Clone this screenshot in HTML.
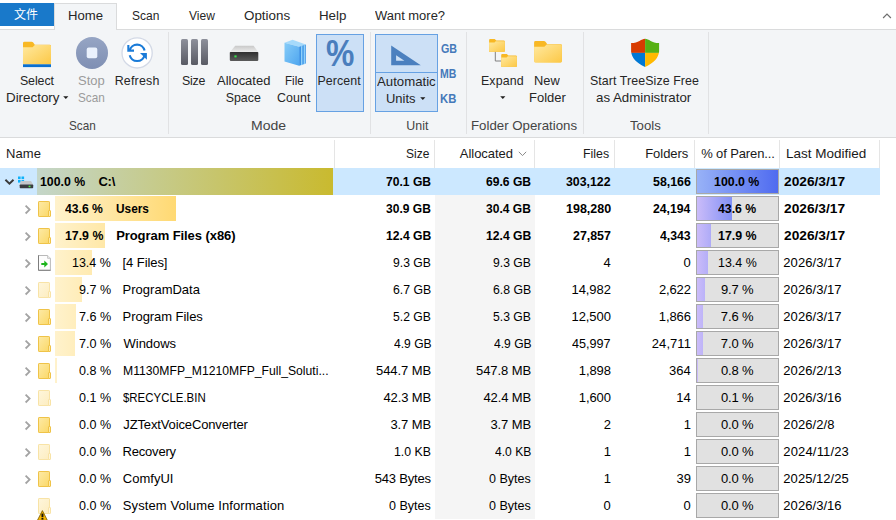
<!DOCTYPE html>
<html lang="en"><head><meta charset="utf-8"><title>TreeSize Free</title>
<style>
html,body{margin:0;padding:0;}
body{width:896px;height:520px;overflow:hidden;background:#fff;position:relative;font-family:"Liberation Sans","Noto Sans CJK SC",sans-serif;font-size:12px;color:#000;}
i{display:block;position:absolute;font-style:normal;}
.x{position:absolute;white-space:nowrap;display:block;}
.ic{position:absolute;}
.tabs{position:absolute;left:0;top:0;width:896px;height:30px;}
.tabs .ln{left:0;top:29px;width:896px;height:1px;background:#dadbdc;}
.tabs .file{left:0;top:3px;width:54px;height:23px;background:#1979ca;}
.tabs .home{left:54px;top:3px;width:63px;height:27px;box-sizing:border-box;border:1px solid #dadbdc;border-bottom:none;background:#f3f5f7;}
.tabs .homecover{left:55px;top:29px;width:61px;height:1px;background:#f3f5f7;}
.ribbon{position:absolute;left:0;top:0;width:896px;height:138px;background:linear-gradient(#f3f5f7,#f3f5f7) no-repeat 0 30px/896px 107px;z-index:0;}
.tabs{z-index:1;}
.ribbon:after{content:"";position:absolute;left:0;top:137px;width:896px;height:1px;background:#dadbdc;}
.ribbon .sep{top:32px;width:1px;height:102px;background:#e1e2e4;}
.ribbon .hl{background:#cce0f6;border:1px solid #66a1e3;box-sizing:border-box;}
.ribbon svg.icons{position:absolute;left:0;top:30px;}
.hdr{position:absolute;left:0;top:0;width:896px;height:0;}
.hdr .vl{top:140px;width:1px;height:28px;background:#e5e5e5;}
.tree{position:absolute;left:0;top:0;width:896px;height:520px;}
.selbg{left:0;width:880px;height:27px;background:#cce8ff;}
.abg{left:435px;width:100px;height:27px;background:#f5f5f5;}
.ubar{height:25px;background:linear-gradient(90deg,#fff2cc 0,#ffb900 278px);}
.ubar.root{height:27px;background:linear-gradient(90deg,#c4d6c9,#c9ba2f);}
.pb{left:696px;width:83px;height:25px;box-sizing:border-box;border:1px solid #a8a8a8;background:#e1e1e1;}
.pb .pf{left:0;top:0;height:23px;background:linear-gradient(90deg,#cbbcf9 0,#2459f0 81px);}
.pb .pf.full{background:linear-gradient(90deg,#98b2f7,#4f6bf0);}

</style></head><body>
<div class="tabs"><i class="file"></i><i class="home"></i><i class="ln"></i><i class="homecover"></i><span class="x" style="left:13.9px;top:6.5px;font-size:12px;line-height:17px;color:#fff;">文件</span><span class="x" style="left:67.80px;top:9.74px;font-size:12px;line-height:13.40px;transform-origin:0 50%;transform:scaleX(1.095);color:#262626;">Home</span><span class="x" style="left:131.95px;top:9.74px;font-size:12px;line-height:13.40px;letter-spacing:0.017px;color:#262626;">Scan</span><span class="x" style="left:188.90px;top:9.74px;font-size:12px;line-height:13.40px;letter-spacing:0.050px;color:#262626;">View</span><span class="x" style="left:243.64px;top:9.74px;font-size:12px;line-height:13.40px;transform-origin:0 50%;transform:scaleX(1.114);color:#262626;">Options</span><span class="x" style="left:318.59px;top:9.74px;font-size:12px;line-height:13.40px;transform-origin:0 50%;transform:scaleX(1.110);color:#262626;">Help</span><span class="x" style="left:375.40px;top:9.74px;font-size:12px;line-height:13.40px;transform-origin:0 50%;transform:scaleX(1.079);color:#262626;">Want more?</span><svg style="position:absolute;left:881px;top:12px" width="12" height="8" viewBox="881 12 12 8"><path d="M883.1 18 L887 14.1 L890.9 18" fill="none" stroke="#6e6e6e" stroke-width="1.2"/></svg></div>
<div class="ribbon"><i class="sep" style="left:168px"></i><i class="sep" style="left:370px"></i><i class="sep" style="left:466px"></i><i class="sep" style="left:583px"></i><i class="sep" style="left:708px"></i><i class="hl" style="left:316px;top:34px;width:48px;height:78px"></i><i class="hl" style="left:375px;top:34px;width:63px;height:78px"></i><i style="left:375px;top:72px;width:63px;height:1px;background:#66a1e3"></i><svg class="icons" width="896" height="107" viewBox="0 30 896 107">
<defs>
<linearGradient id="gf" x1="0" y1="0" x2="1" y2="1"><stop offset="0" stop-color="#ffe9a0"/><stop offset="1" stop-color="#fcc846"/></linearGradient>
<linearGradient id="gs" x1="0" y1="0" x2="0" y2="1"><stop offset="0" stop-color="#96a5c4"/><stop offset="1" stop-color="#7f8fb3"/></linearGradient>
<linearGradient id="gb" x1="0" y1="0" x2="0" y2="1"><stop offset="0" stop-color="#8d909b"/><stop offset="1" stop-color="#595b64"/></linearGradient>
<linearGradient id="gd" x1="0" y1="0" x2="0" y2="1"><stop offset="0" stop-color="#2f2f2f"/><stop offset="1" stop-color="#5a5a5a"/></linearGradient>
<linearGradient id="gt" x1="0" y1="0" x2="0" y2="1"><stop offset="0" stop-color="#c9c9c9"/><stop offset="1" stop-color="#ececec"/></linearGradient>
<linearGradient id="gp" x1="0" y1="0" x2="1" y2="1"><stop offset="0" stop-color="#86ccf8"/><stop offset="1" stop-color="#4fa6ef"/></linearGradient>
</defs>
<!-- select directory folder -->
<path d="M23 43.2 q0 -1.4 1.4 -1.4 h7.2 q1 0 1.6 0.8 l1.6 2.2 h14.8 q1.4 0 1.4 1.4 v18 h-28 z" fill="#f8b824"/>
<path d="M23 47.2 h9.6 l2.2 -2.2 h14.8 q1.4 0 1.4 1.4 v17.8 h-28 z" fill="url(#gf)"/>
<rect x="23" y="64.3" width="28" height="2.8" fill="#0b6fd0"/>
<!-- stop -->
<circle cx="92" cy="52.9" r="16" fill="url(#gs)"/>
<rect x="86.7" y="47.6" width="10.6" height="10.6" rx="2" fill="#eaf1fc"/>
<!-- refresh -->
<circle cx="137.1" cy="52.9" r="15.1" fill="#fff" stroke="#d3d9e6" stroke-width="1.3"/>
<path d="M129.6 50.6 A7.7 7.7 0 0 1 144.6 50.6" fill="none" stroke="#1a7bd8" stroke-width="2.1"/>
<path d="M127.3 45 L127.3 51.7 L134 51.7 L134 49.6 L129.4 49.6 L129.4 45 Z" fill="#1a7bd8"/>
<path d="M144.6 55.2 A7.7 7.7 0 0 1 129.7 55.2" fill="none" stroke="#1a7bd8" stroke-width="2.1"/>
<path d="M140 53 L146.9 53 L146.9 59.8 Z" fill="#1a7bd8"/>
<!-- size bars -->
<rect x="181" y="39" width="7" height="26" rx="1.5" fill="url(#gb)"/>
<rect x="191" y="39" width="7" height="26" rx="1.5" fill="url(#gb)"/>
<rect x="201" y="39" width="7" height="26" rx="1.5" fill="url(#gb)"/>
<!-- drive -->
<path d="M235.2 45.8 L253.6 45.8 L258.3 52.2 L229.8 52.2 Z" fill="url(#gt)"/>
<rect x="229.8" y="52" width="28.5" height="8.9" rx="0.8" fill="url(#gd)"/>
<rect x="234.4" y="55.4" width="2.2" height="2" fill="#37e04a"/>
<!-- file count -->
<path d="M284.5 42.8 L292.6 39.8 L305.8 44.6 L299.1 46.8 Z" fill="#a6dafb"/>
<path d="M299.1 46.8 L305.8 44.6 L305.8 63.6 L299.1 65.8 Z" fill="#3a93e6"/>
<path d="M301 46.2 L302.4 45.7 L302.4 64.7 L301 65.2 Z" fill="#8fd0fa"/>
<path d="M303.7 45.3 L305 44.9 L305 63.9 L303.7 64.3 Z" fill="#8fd0fa"/>
<path d="M284.5 42.8 L299.1 46.8 L299.1 65.8 L284.5 61.6 Z" fill="url(#gp)"/>
<!-- percent -->
<text x="340.2" y="66" text-anchor="middle" font-family="Liberation Sans, sans-serif" font-weight="bold" font-size="37.5" fill="#4a7ebd" transform="translate(340.2 0) scale(0.85 1) translate(-340.2 0)">%</text>
<!-- set square -->
<path d="M391.2 45.4 L420.8 65.2 L391.2 65.2 Z M396.1 55.2 L396.1 60.8 L404.4 60.8 Z" fill="#4b80bf" fill-rule="evenodd"/>
<!-- expand -->
<path d="M495.3 51 V61 H501.5" fill="none" stroke="#808080" stroke-width="1"/>
<path d="M489.1 40 q0 -1 1 -1 h4.6 l1.6 1.6 h7.5 q1 0 1 1 v10.1 h-15.7 z" fill="#f8b824"/>
<path d="M489.1 42.4 h5.4 l1.2 -1.2 h8.1 q1 0 1 1 v8.5 q0 1 -1 1 h-13.7 q-1 0 -1 -1 z" fill="url(#gf)"/>
<path d="M501.2 55 q0 -1 1 -1 h4.6 l1.6 1.6 h7.5 q1 0 1 1 v10.1 h-15.7 z" fill="#f8b824"/>
<path d="M501.2 57.4 h5.4 l1.2 -1.2 h8.1 q1 0 1 1 v8.5 q0 1 -1 1 h-13.7 q-1 0 -1 -1 z" fill="url(#gf)"/>
<!-- new folder -->
<path d="M534.1 42.4 q0 -1.4 1.4 -1.4 h8.4 q1 0 1.6 0.8 l1.8 2.4 h13.3 q1.4 0 1.4 1.4 v15.8 h-27.9 z" fill="#f8b824"/>
<path d="M534.1 46.8 h10.3 l2.2 -2.2 h13.9 q1.4 0 1.4 1.4 v15.3 q0 1.4 -1.4 1.4 h-25 q-1.4 0 -1.4 -1.4 z" fill="url(#gf)"/>
<!-- shield -->
<clipPath id="sh"><path d="M645.1 38.7 C641.5 38.7 638.5 43 631.1 43.1 L631.1 51.5 C631.6 58 636.5 63 645.1 67.1 C653.7 63 658.6 58 659.1 51.5 L659.1 43.1 C651.7 43 648.7 38.7 645.1 38.7 Z"/></clipPath>
<g clip-path="url(#sh)">
<rect x="630" y="38" width="15.1" height="14.9" fill="#d83b01"/>
<rect x="645.1" y="38" width="15" height="14.9" fill="#57b114"/>
<rect x="630" y="52.9" width="15.1" height="15" fill="#0078d4"/>
<rect x="645.1" y="52.9" width="15" height="15" fill="#ffb900"/>
</g>
</svg>
<span class="x" style="left:19.95px;top:74.98px;font-size:12.4px;line-height:13.85px;letter-spacing:-0.080px;color:#262626;">Select</span><span class="x" style="left:5.62px;top:91.98px;font-size:12.4px;line-height:13.85px;transform-origin:0 50%;transform:scaleX(1.078);color:#262626;">Directory</span><span class="x" style="left:78.11px;top:74.98px;font-size:12.4px;line-height:13.85px;transform-origin:0 50%;transform:scaleX(1.047);color:#9b9b9b;">Stop</span><span class="x" style="left:78.19px;top:91.98px;font-size:12.4px;line-height:13.85px;transform-origin:0 50%;transform:scaleX(0.950);color:#9b9b9b;">Scan</span><span class="x" style="left:114.70px;top:74.98px;font-size:12.4px;line-height:13.85px;letter-spacing:0.217px;color:#262626;">Refresh</span><span class="x" style="left:181.95px;top:74.98px;font-size:12.4px;line-height:13.85px;letter-spacing:-0.217px;color:#262626;">Size</span><span class="x" style="left:217.20px;top:74.98px;font-size:12.4px;line-height:13.85px;transform-origin:0 50%;transform:scaleX(1.047);color:#262626;">Allocated</span><span class="x" style="left:225.65px;top:91.98px;font-size:12.4px;line-height:13.85px;letter-spacing:0.038px;color:#262626;">Space</span><span class="x" style="left:284.76px;top:74.98px;font-size:12.4px;line-height:13.85px;transform-origin:0 50%;transform:scaleX(0.935);color:#262626;">File</span><span class="x" style="left:276.95px;top:91.98px;font-size:12.4px;line-height:13.85px;letter-spacing:0.138px;color:#262626;">Count</span><span class="x" style="left:317.40px;top:74.98px;font-size:12.4px;line-height:13.85px;letter-spacing:0.100px;color:#262626;">Percent</span><span class="x" style="left:377.00px;top:75.58px;font-size:12.4px;line-height:13.85px;transform-origin:0 50%;transform:scaleX(1.065);color:#262626;">Automatic</span><span class="x" style="left:386.25px;top:92.58px;font-size:12.4px;line-height:13.85px;transform-origin:0 50%;transform:scaleX(1.047);color:#262626;">Units</span><span class="x" style="left:480.90px;top:74.98px;font-size:12.4px;line-height:13.85px;letter-spacing:0.170px;color:#262626;">Expand</span><span class="x" style="left:534.16px;top:74.98px;font-size:12.4px;line-height:13.85px;transform-origin:0 50%;transform:scaleX(1.036);color:#262626;">New</span><span class="x" style="left:528.65px;top:91.98px;font-size:12.4px;line-height:13.85px;transform-origin:0 50%;transform:scaleX(1.047);color:#262626;">Folder</span><span class="x" style="left:589.95px;top:74.98px;font-size:12.4px;line-height:13.85px;letter-spacing:0.086px;color:#262626;">Start TreeSize Free</span><span class="x" style="left:595.86px;top:91.98px;font-size:12.4px;line-height:13.85px;transform-origin:0 50%;transform:scaleX(1.072);color:#262626;">as Administrator</span><span class="x" style="left:69.49px;top:119.78px;font-size:12.4px;line-height:13.85px;transform-origin:0 50%;transform:scaleX(0.946);color:#444;">Scan</span><span class="x" style="left:250.77px;top:119.78px;font-size:12.4px;line-height:13.85px;transform-origin:0 50%;transform:scaleX(1.132);color:#444;">Mode</span><span class="x" style="left:406.20px;top:119.78px;font-size:12.4px;line-height:13.85px;letter-spacing:0.100px;color:#444;">Unit</span><span class="x" style="left:470.83px;top:119.78px;font-size:12.4px;line-height:13.85px;transform-origin:0 50%;transform:scaleX(1.070);color:#444;">Folder Operations</span><span class="x" style="left:629.93px;top:119.78px;font-size:12.4px;line-height:13.85px;transform-origin:0 50%;transform:scaleX(1.065);color:#444;">Tools</span><svg class="ic" style="left:63.0px;top:96.3px" width="6" height="4" viewBox="0 0 6 4"><path d="M0.2 0.3 H5.4 L2.8 3.1 Z" fill="#1e1e1e"/></svg><svg class="ic" style="left:419.9px;top:97.0px" width="6" height="4" viewBox="0 0 6 4"><path d="M0.2 0.3 H5.4 L2.8 3.1 Z" fill="#1e1e1e"/></svg><svg class="ic" style="left:500.1px;top:96.3px" width="6" height="4" viewBox="0 0 6 4"><path d="M0.2 0.3 H5.4 L2.8 3.1 Z" fill="#1e1e1e"/></svg><span class="x" style="left:440.59px;top:41.84px;font-size:13px;line-height:14.52px;transform-origin:0 50%;transform:scaleX(0.822);font-weight:bold;color:#4579ba;">GB</span><span class="x" style="left:440.39px;top:66.83px;font-size:13px;line-height:14.52px;transform-origin:0 50%;transform:scaleX(0.811);font-weight:bold;color:#4579ba;">MB</span><span class="x" style="left:440.35px;top:92.03px;font-size:13px;line-height:14.52px;transform-origin:0 50%;transform:scaleX(0.869);font-weight:bold;color:#4579ba;">KB</span></div>
<div class="hdr"><i class="vl" style="left:334px"></i><i class="vl" style="left:434px"></i><i class="vl" style="left:534px"></i><i class="vl" style="left:614px"></i><i class="vl" style="left:694px"></i><i class="vl" style="left:779px"></i><i class="vl" style="left:879px"></i><span class="x" style="left:5.90px;top:147.44px;font-size:13px;line-height:14.52px;letter-spacing:0.133px;color:#1a1a1a;">Name</span><span class="x" style="left:405.81px;top:147.44px;font-size:13px;line-height:14.52px;transform-origin:0 50%;transform:scaleX(0.921);color:#1a1a1a;">Size</span><span class="x" style="left:459.80px;top:147.44px;font-size:13px;line-height:14.52px;letter-spacing:-0.031px;color:#1a1a1a;">Allocated</span><span class="x" style="left:582.65px;top:147.44px;font-size:13px;line-height:14.52px;transform-origin:0 50%;transform:scaleX(0.950);color:#1a1a1a;">Files</span><span class="x" style="left:645.20px;top:147.44px;font-size:13px;line-height:14.52px;letter-spacing:-0.033px;color:#1a1a1a;">Folders</span><span class="x" style="left:701.20px;top:147.44px;font-size:13px;line-height:14.52px;letter-spacing:-0.125px;color:#1a1a1a;">% of Paren...</span><span class="x" style="left:785.66px;top:147.44px;font-size:13px;line-height:14.52px;transform-origin:0 50%;transform:scaleX(1.038);color:#1a1a1a;">Last Modified</span><svg class="ic" style="left:518px;top:151px" width="9" height="6" viewBox="0 0 9 6"><path d="M0.8 0.8 L4.5 4.6 L8.2 0.8" fill="none" stroke="#8a8a8a" stroke-width="1"/></svg></div>
<div class="tree">
<i class="selbg" style="top:168px"></i><i class="ubar root" style="left:37px;top:168px;width:296px"></i><svg class="ic" style="left:4px;top:178px" width="11" height="8" viewBox="4 178 11 8"><path d="M5.4 179.7 L9.45 183.7 L13.5 179.7" fill="none" stroke="#3a3a3a" stroke-width="1.9"/></svg><svg class="ic" style="left:17px;top:176px" width="17" height="14" viewBox="17 176 17 14"><rect x="18" y="176.5" width="2.6" height="2.6" fill="#0db2fb"/><rect x="21.5" y="176.5" width="2.6" height="2.6" fill="#0db2fb"/><rect x="18" y="180" width="2.6" height="2.6" fill="#0db2fb"/><rect x="21.5" y="180" width="2.6" height="2.6" fill="#0db2fb"/><path d="M21 181 H31 L33.2 184.8 H19.7 Z" fill="#c4c7cb"/><rect x="19.7" y="184.5" width="13.5" height="3.8" rx="0.7" fill="#3b3d41"/><rect x="28.6" y="185.7" width="1.9" height="1.5" fill="#4df04a"/></svg><span class="x" style="left:40.19px;top:175.44px;font-size:13px;line-height:14.52px;transform-origin:0 50%;transform:scaleX(0.946);font-weight:bold;">100.0 %</span><span class="x" style="left:98.40px;top:175.44px;font-size:13px;line-height:14.52px;letter-spacing:-0.175px;font-weight:bold;">C:\</span><span class="x" style="left:386.03px;top:175.44px;font-size:13px;line-height:14.52px;transform-origin:0 50%;transform:scaleX(0.931);font-weight:bold;">70.1 GB</span><span class="x" style="left:486.03px;top:175.44px;font-size:13px;line-height:14.52px;transform-origin:0 50%;transform:scaleX(0.931);font-weight:bold;">69.6 GB</span><span class="x" style="left:566.26px;top:175.44px;font-size:13px;line-height:14.52px;transform-origin:0 50%;transform:scaleX(0.949);font-weight:bold;">303,122</span><span class="x" style="left:653.02px;top:175.44px;font-size:13px;line-height:14.52px;transform-origin:0 50%;transform:scaleX(0.952);font-weight:bold;">58,166</span><i class="pb" style="top:169px"><i class="pf full" style="width:81.0px"></i></i><span class="x" style="left:714.49px;top:175.44px;font-size:13px;line-height:14.52px;transform-origin:0 50%;transform:scaleX(0.951);font-weight:bold;">100.0 %</span><span class="x" style="left:783.97px;top:175.44px;font-size:13px;line-height:14.52px;transform-origin:0 50%;transform:scaleX(1.056);font-weight:bold;">2026/3/17</span>
<i class="abg" style="top:195px"></i><i class="ubar" style="left:55px;top:196px;width:121.2px"></i><svg class="ic" style="left:24px;top:204px" width="8" height="11" viewBox="24 204 8 11"><path d="M25.6 205.6 L29.6 209.55 L25.6 213.5" fill="none" stroke="#a3a3a3" stroke-width="1.8"/></svg><svg class="ic" style="left:38px;top:201px" width="14" height="16" viewBox="0 0 14 16"><defs><linearGradient id="fgfolder" x1="0" y1="0" x2="1" y2="1"><stop offset="0" stop-color="#fdeaa6"/><stop offset="1" stop-color="#fbd867"/></linearGradient></defs><rect x="0.5" y="0.5" width="11" height="15" rx="0.6" fill="url(#fgfolder)" stroke="#efc348" stroke-width="1"/><rect x="10.5" y="9.5" width="2" height="6" rx="0.5" fill="#fdeaa6" stroke="#efc348" stroke-width="1"/></svg><span class="x" style="left:65.47px;top:202.44px;font-size:13px;line-height:14.52px;transform-origin:0 50%;transform:scaleX(0.935);font-weight:bold;">43.6 %</span><span class="x" style="left:116.22px;top:202.44px;font-size:13px;line-height:14.52px;transform-origin:0 50%;transform:scaleX(0.912);font-weight:bold;">Users</span><span class="x" style="left:386.27px;top:202.44px;font-size:13px;line-height:14.52px;transform-origin:0 50%;transform:scaleX(0.926);font-weight:bold;">30.9 GB</span><span class="x" style="left:486.27px;top:202.44px;font-size:13px;line-height:14.52px;transform-origin:0 50%;transform:scaleX(0.926);font-weight:bold;">30.4 GB</span><span class="x" style="left:565.78px;top:202.44px;font-size:13px;line-height:14.52px;transform-origin:0 50%;transform:scaleX(0.960);font-weight:bold;">198,280</span><span class="x" style="left:653.03px;top:202.44px;font-size:13px;line-height:14.52px;transform-origin:0 50%;transform:scaleX(0.940);font-weight:bold;">24,194</span><i class="pb" style="top:196px"><i class="pf" style="width:35.0px"></i></i><span class="x" style="left:718.21px;top:202.44px;font-size:13px;line-height:14.52px;transform-origin:0 50%;transform:scaleX(0.943);font-weight:bold;">43.6 %</span><span class="x" style="left:783.97px;top:202.44px;font-size:13px;line-height:14.52px;transform-origin:0 50%;transform:scaleX(1.056);font-weight:bold;">2026/3/17</span>
<i class="abg" style="top:222px"></i><i class="ubar" style="left:55px;top:223px;width:49.8px"></i><svg class="ic" style="left:24px;top:231px" width="8" height="11" viewBox="24 204 8 11"><path d="M25.6 205.6 L29.6 209.55 L25.6 213.5" fill="none" stroke="#a3a3a3" stroke-width="1.8"/></svg><svg class="ic" style="left:38px;top:228px" width="14" height="16" viewBox="0 0 14 16"><defs><linearGradient id="fgfolder" x1="0" y1="0" x2="1" y2="1"><stop offset="0" stop-color="#fdeaa6"/><stop offset="1" stop-color="#fbd867"/></linearGradient></defs><rect x="0.5" y="0.5" width="11" height="15" rx="0.6" fill="url(#fgfolder)" stroke="#efc348" stroke-width="1"/><rect x="10.5" y="9.5" width="2" height="6" rx="0.5" fill="#fdeaa6" stroke="#efc348" stroke-width="1"/></svg><span class="x" style="left:64.99px;top:229.44px;font-size:13px;line-height:14.52px;transform-origin:0 50%;transform:scaleX(0.947);font-weight:bold;">17.9 %</span><span class="x" style="left:116.15px;top:229.44px;font-size:13px;line-height:14.52px;letter-spacing:-0.069px;font-weight:bold;">Program Files (x86)</span><span class="x" style="left:385.80px;top:229.44px;font-size:13px;line-height:14.52px;transform-origin:0 50%;transform:scaleX(0.936);font-weight:bold;">12.4 GB</span><span class="x" style="left:485.80px;top:229.44px;font-size:13px;line-height:14.52px;transform-origin:0 50%;transform:scaleX(0.936);font-weight:bold;">12.4 GB</span><span class="x" style="left:573.02px;top:229.44px;font-size:13px;line-height:14.52px;transform-origin:0 50%;transform:scaleX(0.952);font-weight:bold;">27,857</span><span class="x" style="left:660.26px;top:229.44px;font-size:13px;line-height:14.52px;transform-origin:0 50%;transform:scaleX(0.942);font-weight:bold;">4,343</span><i class="pb" style="top:223px"><i class="pf" style="width:14.0px"></i></i><span class="x" style="left:717.73px;top:229.44px;font-size:13px;line-height:14.52px;transform-origin:0 50%;transform:scaleX(0.954);font-weight:bold;">17.9 %</span><span class="x" style="left:783.97px;top:229.44px;font-size:13px;line-height:14.52px;transform-origin:0 50%;transform:scaleX(1.056);font-weight:bold;">2026/3/17</span>
<i class="abg" style="top:249px"></i><i class="ubar" style="left:55px;top:250px;width:37.3px"></i><svg class="ic" style="left:24px;top:258px" width="8" height="11" viewBox="24 204 8 11"><path d="M25.6 205.6 L29.6 209.55 L25.6 213.5" fill="none" stroke="#a3a3a3" stroke-width="1.8"/></svg><svg class="ic" style="left:38px;top:255px" width="13" height="16" viewBox="0 0 13 16"><path d="M0.5 0.5 H9.6 L12.4 3.3 V15.3 H0.5 Z" fill="#fdfdfd" stroke="#b9b9b9" stroke-width="1"/><path d="M0.5 0.3 V15.3 H12.6" fill="none" stroke="#7d7d7d" stroke-width="1"/><path d="M9.6 0.5 V3.3 H12.4" fill="#f0f0f0" stroke="#b9b9b9" stroke-width="0.8"/><path d="M3.3 7.9 H6.3 V5.6 L10 9 L6.3 12.4 V10.1 H3.3 Z" fill="#1cb41c"/></svg><span class="x" style="left:72.14px;top:256.44px;font-size:13px;line-height:14.52px;transform-origin:0 50%;transform:scaleX(0.959);">13.4 %</span><span class="x" style="left:122.60px;top:256.44px;font-size:13px;line-height:14.52px;letter-spacing:-0.087px;">[4 Files]</span><span class="x" style="left:393.31px;top:256.44px;font-size:13px;line-height:14.52px;transform-origin:0 50%;transform:scaleX(0.936);">9.3 GB</span><span class="x" style="left:493.31px;top:256.44px;font-size:13px;line-height:14.52px;transform-origin:0 50%;transform:scaleX(0.936);">9.3 GB</span><span class="x" style="left:603.45px;top:256.44px;font-size:13px;line-height:14.52px;letter-spacing:0.000px;">4</span><span class="x" style="left:683.45px;top:256.44px;font-size:13px;line-height:14.52px;letter-spacing:0.000px;">0</span><i class="pb" style="top:250px"><i class="pf" style="width:10.5px"></i></i><span class="x" style="left:717.69px;top:256.44px;font-size:13px;line-height:14.52px;transform-origin:0 50%;transform:scaleX(0.956);">13.4 %</span><span class="x" style="left:783.35px;top:256.44px;font-size:13px;line-height:14.52px;letter-spacing:0.050px;">2026/3/17</span>
<i class="abg" style="top:276px"></i><i class="ubar" style="left:55px;top:277px;width:27.0px"></i><svg class="ic" style="left:24px;top:285px" width="8" height="11" viewBox="24 204 8 11"><path d="M25.6 205.6 L29.6 209.55 L25.6 213.5" fill="none" stroke="#a3a3a3" stroke-width="1.8"/></svg><svg class="ic" style="left:38px;top:282px" width="14" height="16" viewBox="0 0 14 16"><defs><linearGradient id="fgfolderlight" x1="0" y1="0" x2="1" y2="1"><stop offset="0" stop-color="#fef6dc"/><stop offset="1" stop-color="#fdedc0"/></linearGradient></defs><rect x="0.5" y="0.5" width="11" height="15" rx="0.6" fill="url(#fgfolderlight)" stroke="#f8e3a6" stroke-width="1"/><rect x="10.5" y="9.5" width="2" height="6" rx="0.5" fill="#fef6dc" stroke="#f8e3a6" stroke-width="1"/></svg><span class="x" style="left:78.92px;top:283.44px;font-size:13px;line-height:14.52px;transform-origin:0 50%;transform:scaleX(0.964);">9.7 %</span><span class="x" style="left:122.60px;top:283.44px;font-size:13px;line-height:14.52px;letter-spacing:0.005px;">ProgramData</span><span class="x" style="left:393.07px;top:283.44px;font-size:13px;line-height:14.52px;transform-origin:0 50%;transform:scaleX(0.942);">6.7 GB</span><span class="x" style="left:493.07px;top:283.44px;font-size:13px;line-height:14.52px;transform-origin:0 50%;transform:scaleX(0.942);">6.8 GB</span><span class="x" style="left:571.56px;top:283.44px;font-size:13px;line-height:14.52px;letter-spacing:-0.082px;">14,982</span><span class="x" style="left:659.00px;top:283.44px;font-size:13px;line-height:14.52px;letter-spacing:-0.150px;">2,622</span><i class="pb" style="top:277px"><i class="pf" style="width:7.5px"></i></i><span class="x" style="left:721.00px;top:283.44px;font-size:13px;line-height:14.52px;letter-spacing:-0.163px;">9.7 %</span><span class="x" style="left:783.35px;top:283.44px;font-size:13px;line-height:14.52px;letter-spacing:0.050px;">2026/3/17</span>
<i class="abg" style="top:303px"></i><i class="ubar" style="left:55px;top:304px;width:21.1px"></i><svg class="ic" style="left:24px;top:312px" width="8" height="11" viewBox="24 204 8 11"><path d="M25.6 205.6 L29.6 209.55 L25.6 213.5" fill="none" stroke="#a3a3a3" stroke-width="1.8"/></svg><svg class="ic" style="left:38px;top:309px" width="14" height="16" viewBox="0 0 14 16"><defs><linearGradient id="fgfolder" x1="0" y1="0" x2="1" y2="1"><stop offset="0" stop-color="#fdeaa6"/><stop offset="1" stop-color="#fbd867"/></linearGradient></defs><rect x="0.5" y="0.5" width="11" height="15" rx="0.6" fill="url(#fgfolder)" stroke="#efc348" stroke-width="1"/><rect x="10.5" y="9.5" width="2" height="6" rx="0.5" fill="#fdeaa6" stroke="#efc348" stroke-width="1"/></svg><span class="x" style="left:78.67px;top:310.44px;font-size:13px;line-height:14.52px;transform-origin:0 50%;transform:scaleX(0.972);">7.6 %</span><span class="x" style="left:122.60px;top:310.44px;font-size:13px;line-height:14.52px;letter-spacing:-0.058px;">Program Files</span><span class="x" style="left:393.31px;top:310.44px;font-size:13px;line-height:14.52px;transform-origin:0 50%;transform:scaleX(0.936);">5.2 GB</span><span class="x" style="left:493.31px;top:310.44px;font-size:13px;line-height:14.52px;transform-origin:0 50%;transform:scaleX(0.936);">5.3 GB</span><span class="x" style="left:571.56px;top:310.44px;font-size:13px;line-height:14.52px;letter-spacing:-0.082px;">12,500</span><span class="x" style="left:658.75px;top:310.44px;font-size:13px;line-height:14.52px;letter-spacing:-0.088px;">1,866</span><i class="pb" style="top:304px"><i class="pf" style="width:6.0px"></i></i><span class="x" style="left:720.75px;top:310.44px;font-size:13px;line-height:14.52px;letter-spacing:-0.100px;">7.6 %</span><span class="x" style="left:783.35px;top:310.44px;font-size:13px;line-height:14.52px;letter-spacing:0.050px;">2026/3/17</span>
<i class="abg" style="top:330px"></i><i class="ubar" style="left:55px;top:331px;width:19.5px"></i><svg class="ic" style="left:24px;top:339px" width="8" height="11" viewBox="24 204 8 11"><path d="M25.6 205.6 L29.6 209.55 L25.6 213.5" fill="none" stroke="#a3a3a3" stroke-width="1.8"/></svg><svg class="ic" style="left:38px;top:336px" width="14" height="16" viewBox="0 0 14 16"><defs><linearGradient id="fgfolder" x1="0" y1="0" x2="1" y2="1"><stop offset="0" stop-color="#fdeaa6"/><stop offset="1" stop-color="#fbd867"/></linearGradient></defs><rect x="0.5" y="0.5" width="11" height="15" rx="0.6" fill="url(#fgfolder)" stroke="#efc348" stroke-width="1"/><rect x="10.5" y="9.5" width="2" height="6" rx="0.5" fill="#fdeaa6" stroke="#efc348" stroke-width="1"/></svg><span class="x" style="left:78.67px;top:337.44px;font-size:13px;line-height:14.52px;transform-origin:0 50%;transform:scaleX(0.972);">7.0 %</span><span class="x" style="left:123.60px;top:337.44px;font-size:13px;line-height:14.52px;letter-spacing:-0.058px;">Windows</span><span class="x" style="left:393.55px;top:337.44px;font-size:13px;line-height:14.52px;transform-origin:0 50%;transform:scaleX(0.930);">4.9 GB</span><span class="x" style="left:493.55px;top:337.44px;font-size:13px;line-height:14.52px;transform-origin:0 50%;transform:scaleX(0.930);">4.9 GB</span><span class="x" style="left:572.32px;top:337.44px;font-size:13px;line-height:14.52px;transform-origin:0 50%;transform:scaleX(0.970);">45,997</span><span class="x" style="left:651.81px;top:337.44px;font-size:13px;line-height:14.52px;letter-spacing:0.068px;">24,711</span><i class="pb" style="top:331px"><i class="pf" style="width:5.5px"></i></i><span class="x" style="left:720.75px;top:337.44px;font-size:13px;line-height:14.52px;letter-spacing:-0.100px;">7.0 %</span><span class="x" style="left:783.35px;top:337.44px;font-size:13px;line-height:14.52px;letter-spacing:0.050px;">2026/3/17</span>
<i class="abg" style="top:357px"></i><i class="ubar" style="left:55px;top:358px;width:2.2px"></i><svg class="ic" style="left:24px;top:366px" width="8" height="11" viewBox="24 204 8 11"><path d="M25.6 205.6 L29.6 209.55 L25.6 213.5" fill="none" stroke="#a3a3a3" stroke-width="1.8"/></svg><svg class="ic" style="left:38px;top:363px" width="14" height="16" viewBox="0 0 14 16"><defs><linearGradient id="fgfolder" x1="0" y1="0" x2="1" y2="1"><stop offset="0" stop-color="#fdeaa6"/><stop offset="1" stop-color="#fbd867"/></linearGradient></defs><rect x="0.5" y="0.5" width="11" height="15" rx="0.6" fill="url(#fgfolder)" stroke="#efc348" stroke-width="1"/><rect x="10.5" y="9.5" width="2" height="6" rx="0.5" fill="#fdeaa6" stroke="#efc348" stroke-width="1"/></svg><span class="x" style="left:78.92px;top:364.44px;font-size:13px;line-height:14.52px;transform-origin:0 50%;transform:scaleX(0.964);">0.8 %</span><span class="x" style="left:122.66px;top:364.44px;font-size:13px;line-height:14.52px;transform-origin:0 50%;transform:scaleX(0.937);">M1130MFP_M1210MFP_Full_Soluti...</span><span class="x" style="left:376.09px;top:364.44px;font-size:13px;line-height:14.52px;letter-spacing:-0.084px;">544.7 MB</span><span class="x" style="left:476.09px;top:364.44px;font-size:13px;line-height:14.52px;letter-spacing:-0.084px;">547.8 MB</span><span class="x" style="left:578.75px;top:364.44px;font-size:13px;line-height:14.52px;letter-spacing:-0.088px;">1,898</span><span class="x" style="left:668.95px;top:364.44px;font-size:13px;line-height:14.52px;letter-spacing:0.000px;">364</span><i class="pb" style="top:358px"><i class="pf" style="width:0.5px"></i></i><span class="x" style="left:721.00px;top:364.44px;font-size:13px;line-height:14.52px;letter-spacing:-0.163px;">0.8 %</span><span class="x" style="left:783.35px;top:364.44px;font-size:13px;line-height:14.52px;letter-spacing:0.050px;">2026/2/13</span>
<i class="abg" style="top:384px"></i><svg class="ic" style="left:24px;top:393px" width="8" height="11" viewBox="24 204 8 11"><path d="M25.6 205.6 L29.6 209.55 L25.6 213.5" fill="none" stroke="#a3a3a3" stroke-width="1.8"/></svg><svg class="ic" style="left:38px;top:390px" width="14" height="16" viewBox="0 0 14 16"><defs><linearGradient id="fgfolderlight" x1="0" y1="0" x2="1" y2="1"><stop offset="0" stop-color="#fef6dc"/><stop offset="1" stop-color="#fdedc0"/></linearGradient></defs><rect x="0.5" y="0.5" width="11" height="15" rx="0.6" fill="url(#fgfolderlight)" stroke="#f8e3a6" stroke-width="1"/><rect x="10.5" y="9.5" width="2" height="6" rx="0.5" fill="#fef6dc" stroke="#f8e3a6" stroke-width="1"/></svg><span class="x" style="left:78.92px;top:391.44px;font-size:13px;line-height:14.52px;transform-origin:0 50%;transform:scaleX(0.964);">0.1 %</span><span class="x" style="left:123.38px;top:391.44px;font-size:13px;line-height:14.52px;transform-origin:0 50%;transform:scaleX(0.880);">$RECYCLE.BIN</span><span class="x" style="left:383.53px;top:391.44px;font-size:13px;line-height:14.52px;letter-spacing:-0.130px;">42.3 MB</span><span class="x" style="left:483.53px;top:391.44px;font-size:13px;line-height:14.52px;letter-spacing:-0.130px;">42.4 MB</span><span class="x" style="left:578.75px;top:391.44px;font-size:13px;line-height:14.52px;letter-spacing:-0.088px;">1,600</span><span class="x" style="left:676.20px;top:391.44px;font-size:13px;line-height:14.52px;letter-spacing:0.000px;">14</span><i class="pb" style="top:385px"><i class="pf" style="width:0.0px"></i></i><span class="x" style="left:721.00px;top:391.44px;font-size:13px;line-height:14.52px;letter-spacing:-0.163px;">0.1 %</span><span class="x" style="left:783.35px;top:391.44px;font-size:13px;line-height:14.52px;letter-spacing:0.050px;">2026/3/16</span>
<i class="abg" style="top:411px"></i><svg class="ic" style="left:24px;top:420px" width="8" height="11" viewBox="24 204 8 11"><path d="M25.6 205.6 L29.6 209.55 L25.6 213.5" fill="none" stroke="#a3a3a3" stroke-width="1.8"/></svg><svg class="ic" style="left:38px;top:417px" width="14" height="16" viewBox="0 0 14 16"><defs><linearGradient id="fgfolder" x1="0" y1="0" x2="1" y2="1"><stop offset="0" stop-color="#fdeaa6"/><stop offset="1" stop-color="#fbd867"/></linearGradient></defs><rect x="0.5" y="0.5" width="11" height="15" rx="0.6" fill="url(#fgfolder)" stroke="#efc348" stroke-width="1"/><rect x="10.5" y="9.5" width="2" height="6" rx="0.5" fill="#fdeaa6" stroke="#efc348" stroke-width="1"/></svg><span class="x" style="left:78.92px;top:418.44px;font-size:13px;line-height:14.52px;transform-origin:0 50%;transform:scaleX(0.964);">0.0 %</span><span class="x" style="left:123.35px;top:418.44px;font-size:13px;line-height:14.52px;letter-spacing:-0.139px;">JZTextVoiceConverter</span><span class="x" style="left:390.47px;top:418.44px;font-size:13px;line-height:14.52px;letter-spacing:-0.094px;">3.7 MB</span><span class="x" style="left:490.47px;top:418.44px;font-size:13px;line-height:14.52px;letter-spacing:-0.094px;">3.7 MB</span><span class="x" style="left:603.70px;top:418.44px;font-size:13px;line-height:14.52px;letter-spacing:0.000px;">2</span><span class="x" style="left:683.70px;top:418.44px;font-size:13px;line-height:14.52px;letter-spacing:0.000px;">1</span><i class="pb" style="top:412px"><i class="pf" style="width:0.0px"></i></i><span class="x" style="left:721.00px;top:418.44px;font-size:13px;line-height:14.52px;letter-spacing:-0.163px;">0.0 %</span><span class="x" style="left:783.35px;top:418.44px;font-size:13px;line-height:14.52px;letter-spacing:0.064px;">2026/2/8</span>
<i class="abg" style="top:438px"></i><svg class="ic" style="left:24px;top:447px" width="8" height="11" viewBox="24 204 8 11"><path d="M25.6 205.6 L29.6 209.55 L25.6 213.5" fill="none" stroke="#a3a3a3" stroke-width="1.8"/></svg><svg class="ic" style="left:38px;top:444px" width="14" height="16" viewBox="0 0 14 16"><defs><linearGradient id="fgfolderlight" x1="0" y1="0" x2="1" y2="1"><stop offset="0" stop-color="#fef6dc"/><stop offset="1" stop-color="#fdedc0"/></linearGradient></defs><rect x="0.5" y="0.5" width="11" height="15" rx="0.6" fill="url(#fgfolderlight)" stroke="#f8e3a6" stroke-width="1"/><rect x="10.5" y="9.5" width="2" height="6" rx="0.5" fill="#fef6dc" stroke="#f8e3a6" stroke-width="1"/></svg><span class="x" style="left:78.92px;top:445.44px;font-size:13px;line-height:14.52px;transform-origin:0 50%;transform:scaleX(0.964);">0.0 %</span><span class="x" style="left:122.60px;top:445.44px;font-size:13px;line-height:14.52px;letter-spacing:-0.207px;">Recovery</span><span class="x" style="left:394.26px;top:445.44px;font-size:13px;line-height:14.52px;transform-origin:0 50%;transform:scaleX(0.947);">1.0 KB</span><span class="x" style="left:494.98px;top:445.44px;font-size:13px;line-height:14.52px;transform-origin:0 50%;transform:scaleX(0.929);">4.0 KB</span><span class="x" style="left:603.70px;top:445.44px;font-size:13px;line-height:14.52px;letter-spacing:0.000px;">1</span><span class="x" style="left:683.70px;top:445.44px;font-size:13px;line-height:14.52px;letter-spacing:0.000px;">1</span><i class="pb" style="top:439px"><i class="pf" style="width:0.0px"></i></i><span class="x" style="left:721.00px;top:445.44px;font-size:13px;line-height:14.52px;letter-spacing:-0.163px;">0.0 %</span><span class="x" style="left:783.35px;top:445.44px;font-size:13px;line-height:14.52px;letter-spacing:0.150px;">2024/11/23</span>
<i class="abg" style="top:465px"></i><svg class="ic" style="left:24px;top:474px" width="8" height="11" viewBox="24 204 8 11"><path d="M25.6 205.6 L29.6 209.55 L25.6 213.5" fill="none" stroke="#a3a3a3" stroke-width="1.8"/></svg><svg class="ic" style="left:38px;top:471px" width="14" height="16" viewBox="0 0 14 16"><defs><linearGradient id="fgfolder" x1="0" y1="0" x2="1" y2="1"><stop offset="0" stop-color="#fdeaa6"/><stop offset="1" stop-color="#fbd867"/></linearGradient></defs><rect x="0.5" y="0.5" width="11" height="15" rx="0.6" fill="url(#fgfolder)" stroke="#efc348" stroke-width="1"/><rect x="10.5" y="9.5" width="2" height="6" rx="0.5" fill="#fdeaa6" stroke="#efc348" stroke-width="1"/></svg><span class="x" style="left:78.92px;top:472.44px;font-size:13px;line-height:14.52px;transform-origin:0 50%;transform:scaleX(0.964);">0.0 %</span><span class="x" style="left:122.85px;top:472.44px;font-size:13px;line-height:14.52px;letter-spacing:0.000px;">ComfyUI</span><span class="x" style="left:374.72px;top:472.44px;font-size:13px;line-height:14.52px;letter-spacing:-0.184px;">543 Bytes</span><span class="x" style="left:489.12px;top:472.44px;font-size:13px;line-height:14.52px;transform-origin:0 50%;transform:scaleX(0.962);">0 Bytes</span><span class="x" style="left:603.70px;top:472.44px;font-size:13px;line-height:14.52px;letter-spacing:0.000px;">1</span><span class="x" style="left:676.45px;top:472.44px;font-size:13px;line-height:14.52px;letter-spacing:0.000px;">39</span><i class="pb" style="top:466px"><i class="pf" style="width:0.0px"></i></i><span class="x" style="left:721.00px;top:472.44px;font-size:13px;line-height:14.52px;letter-spacing:-0.163px;">0.0 %</span><span class="x" style="left:783.35px;top:472.44px;font-size:13px;line-height:14.52px;letter-spacing:0.039px;">2025/12/25</span>
<i class="abg" style="top:492px"></i><svg class="ic" style="left:38px;top:498px" width="14" height="16" viewBox="0 0 14 16"><defs><linearGradient id="fgfolderwarn" x1="0" y1="0" x2="1" y2="1"><stop offset="0" stop-color="#fef6dc"/><stop offset="1" stop-color="#fdedc0"/></linearGradient></defs><rect x="0.5" y="0.5" width="11" height="15" rx="0.6" fill="url(#fgfolderwarn)" stroke="#f8e3a6" stroke-width="1"/><rect x="10.5" y="9.5" width="2" height="6" rx="0.5" fill="#fef6dc" stroke="#f8e3a6" stroke-width="1"/></svg><svg class="ic" style="left:37px;top:510px" width="11" height="11" viewBox="0 0 11 11"><path d="M5.4 0.6 L10.4 10.4 L0.4 10.4 Z" fill="#f4b400" stroke="#7a5a00" stroke-width="0.8" stroke-linejoin="round"/><rect x="4.5" y="3.6" width="1.9" height="3.6" fill="#111"/><rect x="4.5" y="8" width="1.9" height="1.6" fill="#111"/></svg><span class="x" style="left:78.92px;top:499.44px;font-size:13px;line-height:14.52px;transform-origin:0 50%;transform:scaleX(0.964);">0.0 %</span><span class="x" style="left:122.85px;top:499.44px;font-size:13px;line-height:14.52px;letter-spacing:0.100px;">System Volume Information</span><span class="x" style="left:389.12px;top:499.44px;font-size:13px;line-height:14.52px;transform-origin:0 50%;transform:scaleX(0.962);">0 Bytes</span><span class="x" style="left:489.12px;top:499.44px;font-size:13px;line-height:14.52px;transform-origin:0 50%;transform:scaleX(0.962);">0 Bytes</span><span class="x" style="left:603.45px;top:499.44px;font-size:13px;line-height:14.52px;letter-spacing:0.000px;">0</span><span class="x" style="left:683.45px;top:499.44px;font-size:13px;line-height:14.52px;letter-spacing:0.000px;">0</span><i class="pb" style="top:493px"><i class="pf" style="width:0.0px"></i></i><span class="x" style="left:721.00px;top:499.44px;font-size:13px;line-height:14.52px;letter-spacing:-0.163px;">0.0 %</span><span class="x" style="left:783.35px;top:499.44px;font-size:13px;line-height:14.52px;letter-spacing:0.050px;">2026/3/16</span>
</div>
</body></html>
